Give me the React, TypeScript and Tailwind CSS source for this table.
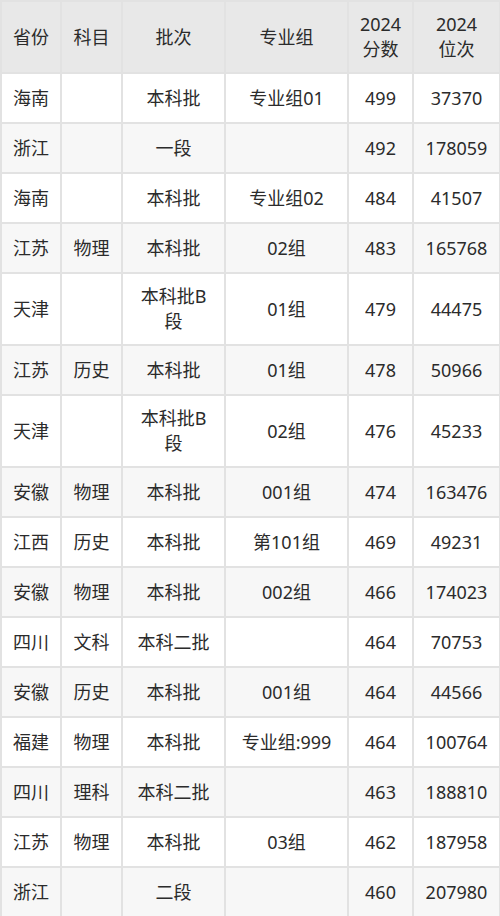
import React from "react";

const rows: [string, string, string, string, string, string][] = [
  ["海南", "", "本科批", "专业组01", "499", "37370"],
  ["浙江", "", "一段", "", "492", "178059"],
  ["海南", "", "本科批", "专业组02", "484", "41507"],
  ["江苏", "物理", "本科批", "02组", "483", "165768"],
  ["天津", "", "本科批B段", "01组", "479", "44475"],
  ["江苏", "历史", "本科批", "01组", "478", "50966"],
  ["天津", "", "本科批B段", "02组", "476", "45233"],
  ["安徽", "物理", "本科批", "001组", "474", "163476"],
  ["江西", "历史", "本科批", "第101组", "469", "49231"],
  ["安徽", "物理", "本科批", "002组", "466", "174023"],
  ["四川", "文科", "本科二批", "", "464", "70753"],
  ["安徽", "历史", "本科批", "001组", "464", "44566"],
  ["福建", "物理", "本科批", "专业组:999", "464", "100764"],
  ["四川", "理科", "本科二批", "", "463", "188810"],
  ["江苏", "物理", "本科批", "03组", "462", "187958"],
  ["浙江", "", "二段", "", "460", "207980"],
];

export default function App() {
  const cell = "border-2 border-[#e2e2e2] text-center align-middle px-0";
  return (
    <div
      className="w-[500px] h-[916px] overflow-hidden bg-white text-[#2b2b2b]"
      style={{ fontFamily: '"Noto Sans", "Noto Sans CJK SC", sans-serif' }}
    >
      <table className="w-[499px] border-collapse table-fixed text-[18px] leading-[25px]">
        <colgroup>
          <col className="w-[60px]" />
          <col className="w-[61px]" />
          <col className="w-[103px]" />
          <col className="w-[123px]" />
          <col className="w-[65px]" />
          <col className="w-[87px]" />
        </colgroup>
        <thead>
          <tr className="h-[72px] bg-[#e8e8e8]">
            <th className={cell + " font-normal"}>省份</th>
            <th className={cell + " font-normal"}>科目</th>
            <th className={cell + " font-normal"}>批次</th>
            <th className={cell + " font-normal"}>专业组</th>
            <th className={cell + " font-normal"}>
              2024
              <br />
              分数
            </th>
            <th className={cell + " font-normal"}>
              2024
              <br />
              位次
            </th>
          </tr>
        </thead>
        <tbody>
          {rows.map((r, i) => {
            const tall = r[2] === "本科批B段";
            return (
              <tr
                key={i}
                className={(tall ? "h-[72px] " : "h-[50px] ") + (i % 2 === 1 ? "bg-[#f7f7f7]" : "bg-white")}
              >
                <td className={cell}>{r[0]}</td>
                <td className={cell}>{r[1]}</td>
                <td className={cell}>
                  {tall ? (
                    <>
                      本科批B
                      <br />段
                    </>
                  ) : (
                    r[2]
                  )}
                </td>
                <td className={cell + " whitespace-nowrap"}>{r[3]}</td>
                <td className={cell}>{r[4]}</td>
                <td className={cell}>{r[5]}</td>
              </tr>
            );
          })}
        </tbody>
      </table>
    </div>
  );
}
